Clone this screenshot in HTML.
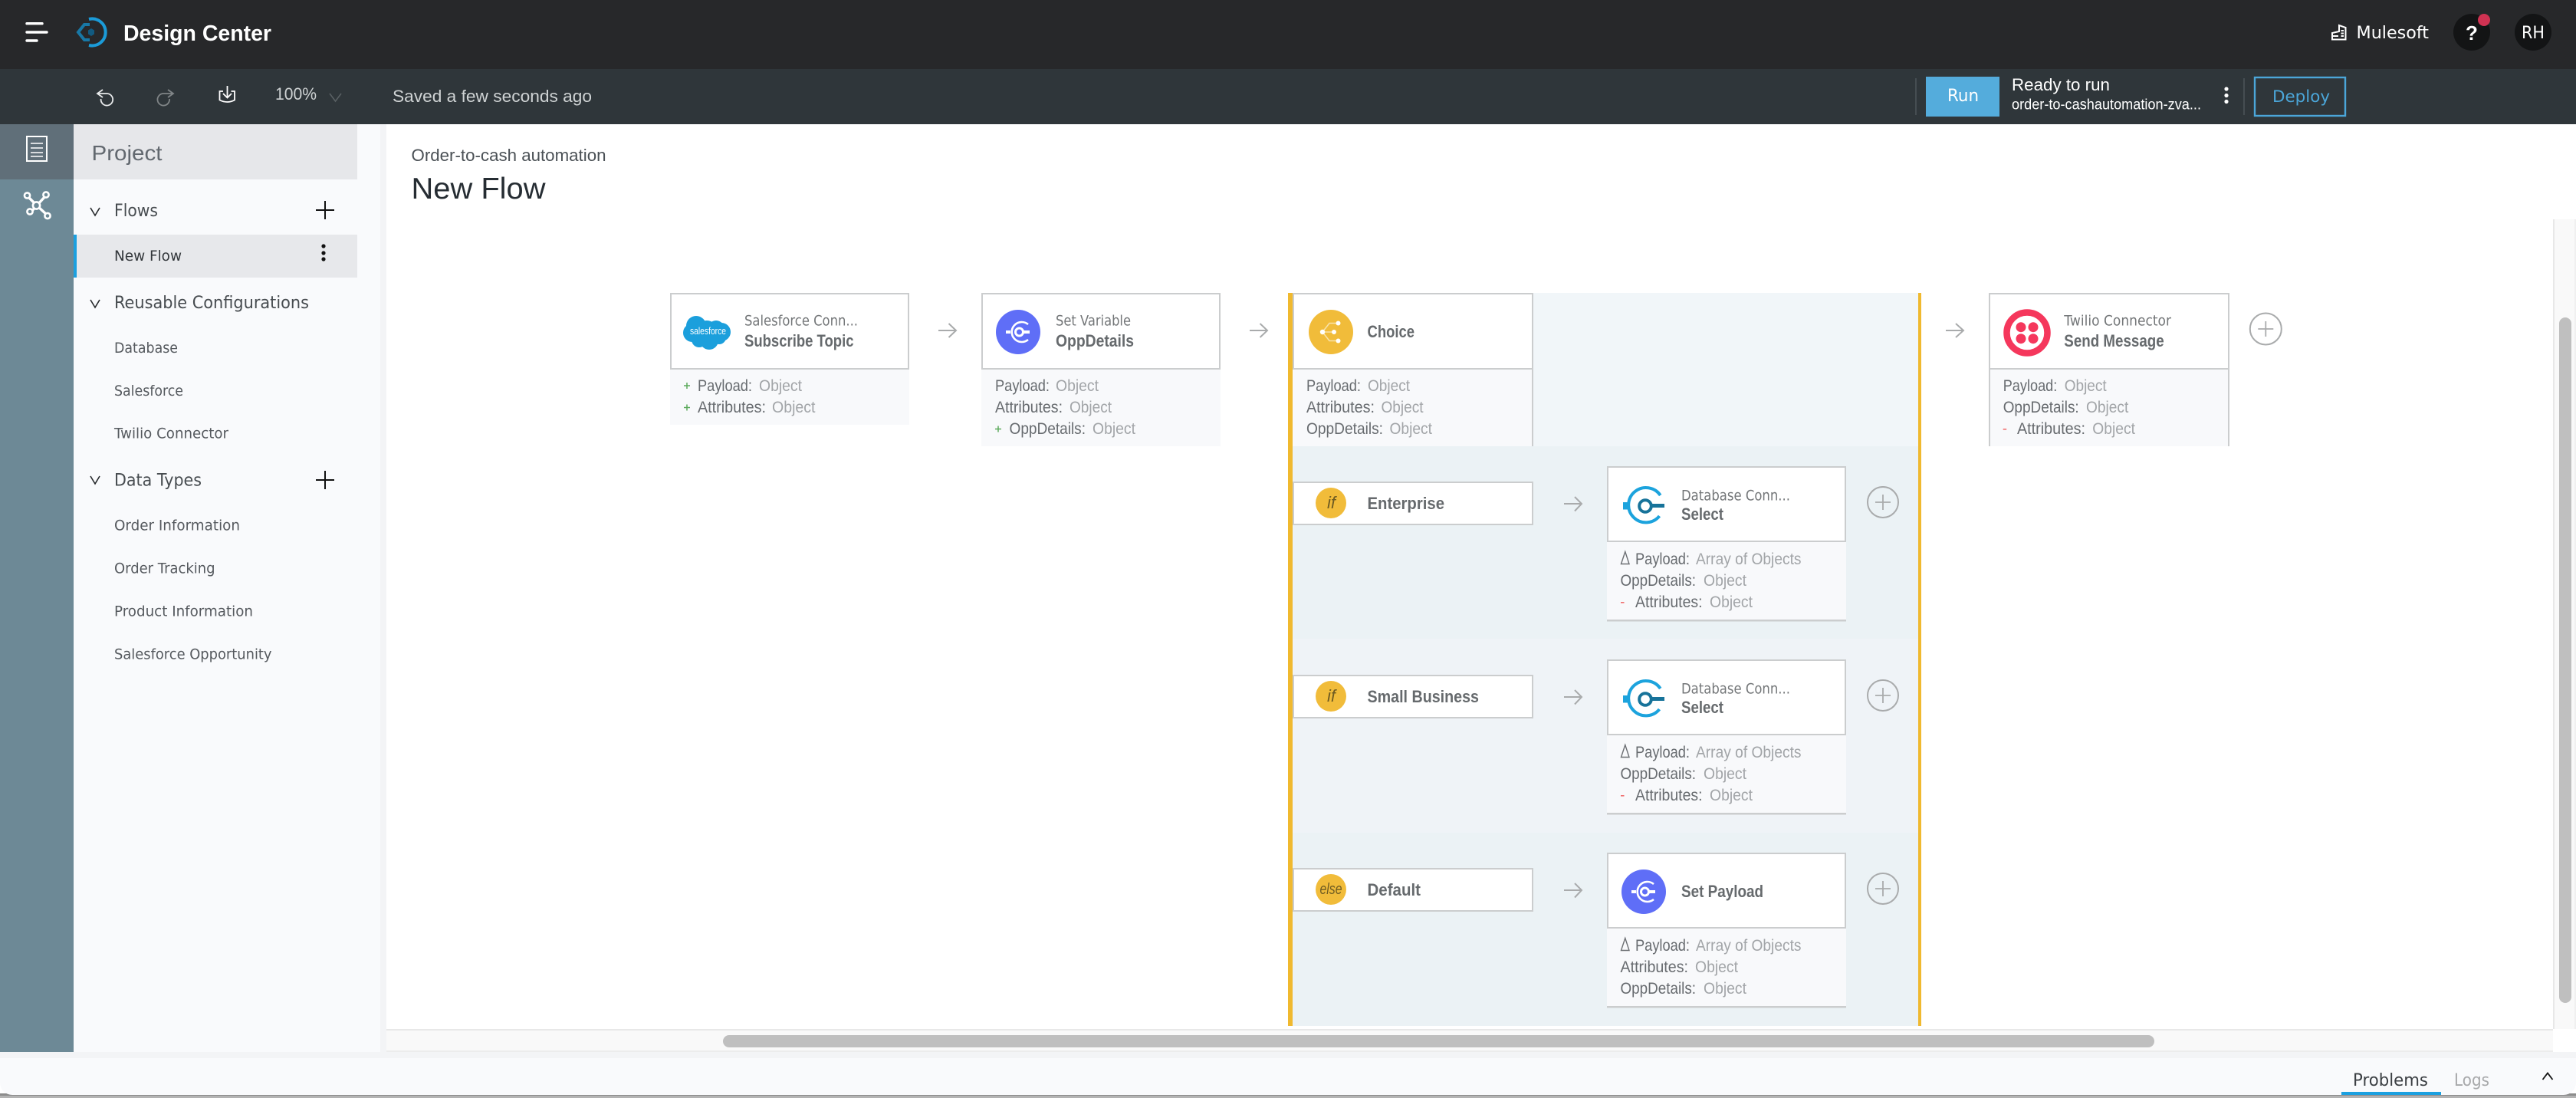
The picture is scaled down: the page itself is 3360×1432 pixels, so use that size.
<!DOCTYPE html>
<html><head><meta charset="utf-8"><title>Design Center</title>
<style>
html,body{margin:0;padding:0;background:#fff;width:3360px;height:1432px;overflow:hidden}
svg{display:block}
text{white-space:pre}
.l{font-family:"Liberation Sans",sans-serif}
.d{font-family:"DejaVu Sans","Liberation Sans",sans-serif}
.side{font-family:"DejaVu Sans","Liberation Sans",sans-serif;font-size:19px;fill:#55595e}
.head{font-family:"DejaVu Sans","Liberation Sans",sans-serif;font-size:22px;fill:#474c50}
.tt{font-family:"DejaVu Sans","Liberation Sans",sans-serif;font-size:19px;fill:#737678}
.tb{font-family:"Liberation Sans",sans-serif;font-size:22px;font-weight:bold;fill:#666a6d}
.k{font-family:"Liberation Sans",sans-serif;font-size:21px;fill:#676b6f}
.v{font-family:"Liberation Sans",sans-serif;font-size:21px;fill:#a2a5a8}
.arw{fill:none;stroke:#a9abac;stroke-width:2}
.bx{fill:#fff;stroke:#cbcdce;stroke-width:2}
</style></head><body>
<svg xmlns="http://www.w3.org/2000/svg" width="3360" height="1432" viewBox="0 0 3360 1432">
<rect width="3360" height="1432" fill="#fff"/>
<!-- top bars -->
<rect width="3360" height="90" fill="#27282a"/>
<rect y="90" width="3360" height="72" fill="#2f363a"/>
<g fill="none" stroke="#fff" stroke-width="3.4" stroke-linecap="round"><path d="M35 30.7H55M35 42H61M35 53H48"/></g>
<path d="M116 25A17.5 17.5 0 1 1 116 59" fill="none" stroke="#1b9bd8" stroke-width="4"/>
<path d="M117 32H110L102 42L110 52H117" fill="none" stroke="#1878a6" stroke-width="4"/>
<path d="M119 37L123 39.5V44.5L119 47L115 44.5V39.5Z" fill="#125a80"/>
<text class="l" x="161" y="53" font-size="29" font-weight="bold" fill="#fff" textLength="193" lengthAdjust="spacingAndGlyphs">Design Center</text>
<!-- toolbar -->
<g fill="none" stroke-width="1.8">
<path d="M134 117L127 122L134 127M127 122H139.5A7.8 7.8 0 1 1 131.6 129" stroke="#e8eaeb"/>
<path d="M219 117L226 122L219 127M226 122H213.5A7.8 7.8 0 1 0 221 129" stroke="#808587"/>
<path d="M291 119H286.5V130.5Q296.5 135.5 306 130.5V119H301.5M296.5 112V127M291 122L296.5 127.5L302 122" stroke="#fff"/>
<path d="M430 122L437.5 132L445 122" stroke="#596063" stroke-width="1.6"/>
</g>
<text class="l" x="359" y="130" font-size="22" fill="#cfd3d4" textLength="54" lengthAdjust="spacingAndGlyphs">100%</text>
<text class="l" x="512" y="133" font-size="22" fill="#cfd3d4" textLength="260" lengthAdjust="spacingAndGlyphs">Saved a few seconds ago</text>
<rect x="2498" y="102" width="2" height="48" fill="#454d52"/>
<rect x="2512" y="100" width="96" height="52" fill="#54acdc"/>
<text class="d" x="2540" y="132" font-size="22" fill="#fff" textLength="41" lengthAdjust="spacingAndGlyphs">Run</text>
<text class="l" x="2624" y="118" font-size="22" fill="#fff" textLength="128" lengthAdjust="spacingAndGlyphs">Ready to run</text>
<text class="l" x="2624" y="142.5" font-size="19" fill="#fff" textLength="247" lengthAdjust="spacingAndGlyphs">order-to-cashautomation-zva...</text>
<g fill="#fff"><circle cx="2904" cy="116" r="2.6"/><circle cx="2904" cy="124.5" r="2.6"/><circle cx="2904" cy="132.5" r="2.6"/></g>
<rect x="2926" y="102" width="2" height="48" fill="#454d52"/>
<rect x="2941" y="101" width="118" height="50" fill="none" stroke="#4ba6d9" stroke-width="2.4"/>
<text class="d" x="2964" y="133" font-size="21" fill="#4ba6d9" textLength="75" lengthAdjust="spacingAndGlyphs">Deploy</text>
<!-- user cluster -->
<path d="M3042 51.5V43L3051 41V33L3059.5 36V51.5ZM3042 47H3050M3053.5 40H3057M3053.5 43.5H3057M3053.5 47H3057" fill="none" stroke="#fff" stroke-width="2"/>
<text class="d" x="3073.5" y="50" font-size="22" fill="#fff" textLength="94.5" lengthAdjust="spacingAndGlyphs">Mulesoft</text>
<circle cx="3224" cy="42" r="24" fill="#131415"/>
<circle cx="3240" cy="26" r="8" fill="#d03252"/>
<text class="l" x="3224" y="52" font-size="26" font-weight="bold" fill="#fff" text-anchor="middle">?</text>
<circle cx="3304" cy="42" r="24" fill="#131415"/>
<text class="d" x="3289" y="50" font-size="22" fill="#fff" textLength="30" lengthAdjust="spacingAndGlyphs">RH</text>
<!-- left rail -->
<rect y="162" width="96" height="1210" fill="#6d8996"/>
<rect y="162" width="96" height="72" fill="#606f79"/>
<rect x="35" y="178" width="26" height="32" fill="none" stroke="#fff" stroke-width="2"/>
<path d="M40 187H56M40 193H56M40 199H56M40 204H56" stroke="#fff" stroke-width="1.6"/>
<g fill="#6d8996" stroke="#fff" stroke-width="2.6">
<path d="M37 257L48 268L59 256M40 277L48 268L61 280" fill="none" stroke-width="3.4"/>
<circle cx="35.5" cy="255" r="3.6"/><circle cx="60" cy="254" r="3.6"/><circle cx="39" cy="276" r="3.6"/><circle cx="62" cy="281.5" r="3.6"/><circle cx="47.5" cy="268" r="4.6"/>
</g>
<!-- sidebar -->
<rect x="96" y="162" width="400" height="1210" fill="#f9fafc"/>
<rect x="496" y="162" width="8" height="1210" fill="#f3f4f6"/>
<rect x="96" y="162" width="370" height="72" fill="#e6e7ea"/>
<text class="l" x="119.5" y="209" font-size="28" fill="#62686f" textLength="92" lengthAdjust="spacingAndGlyphs">Project</text>
<rect x="96" y="306" width="370" height="56" fill="#e7e8eb"/>
<rect x="96" y="306" width="4" height="56" fill="#1ba0e0"/>
<g fill="none" stroke="#26292c" stroke-width="1.6">
<path d="M118 271L124 281L130 271M118 391L124 401L130 391M118 621L124 631L130 621"/>
</g>
<path d="M412 274H436M424 262V286M412 626H436M424 614V638" stroke="#111" stroke-width="2"/>
<g fill="#111"><circle cx="422" cy="321" r="2.6"/><circle cx="422" cy="330" r="2.6"/><circle cx="422" cy="338" r="2.6"/></g>
<text class="head" x="149" y="282" textLength="57" lengthAdjust="spacingAndGlyphs">Flows</text>
<text class="head" x="149" y="402" textLength="254" lengthAdjust="spacingAndGlyphs">Reusable Configurations</text>
<text class="head" x="149" y="633.5" textLength="114" lengthAdjust="spacingAndGlyphs">Data Types</text>
<text class="side" x="149" y="340" style="fill:#33373b" textLength="88" lengthAdjust="spacingAndGlyphs">New Flow</text>
<text class="side" x="149" y="460" textLength="83" lengthAdjust="spacingAndGlyphs">Database</text>
<text class="side" x="149" y="516" textLength="90" lengthAdjust="spacingAndGlyphs">Salesforce</text>
<text class="side" x="149" y="571.5" textLength="149" lengthAdjust="spacingAndGlyphs">Twilio Connector</text>
<text class="side" x="149" y="691.5" textLength="164" lengthAdjust="spacingAndGlyphs">Order Information</text>
<text class="side" x="149" y="747.5" textLength="131.5" lengthAdjust="spacingAndGlyphs">Order Tracking</text>
<text class="side" x="149" y="803.5" textLength="181" lengthAdjust="spacingAndGlyphs">Product Information</text>
<text class="side" x="149" y="859.5" textLength="205.5" lengthAdjust="spacingAndGlyphs">Salesforce Opportunity</text>
<!-- title -->
<text class="l" x="536.5" y="210" font-size="22.5" fill="#4a5055" textLength="254" lengthAdjust="spacingAndGlyphs">Order-to-cash automation</text>
<text class="l" x="536.5" y="259" font-size="39" fill="#262d33" textLength="175" lengthAdjust="spacingAndGlyphs">New Flow</text>
<!-- Node 1: Salesforce -->
<rect x="874" y="482" width="312" height="72" fill="#f8f9fb"/>
<rect x="875" y="383" width="310" height="98" class="bx"/>
<g fill="#1b9fdc"><circle cx="908" cy="425" r="13"/><circle cx="934" cy="429" r="11"/><circle cx="941" cy="433" r="12"/><circle cx="903" cy="434" r="12"/><circle cx="925" cy="444" r="12"/><circle cx="912" cy="443" r="10"/><circle cx="938" cy="440" r="9"/><circle cx="922" cy="432" r="14"/></g>
<text class="l" x="900" y="436" font-size="13" fill="#fff" textLength="47" lengthAdjust="spacingAndGlyphs">salesforce</text>
<text class="tt" x="971" y="424.5" textLength="148" lengthAdjust="spacingAndGlyphs">Salesforce Conn...</text>
<text class="tb" x="971" y="452" textLength="142.5" lengthAdjust="spacingAndGlyphs">Subscribe Topic</text>
<path d="M892 503H900M896 499V507M892 531.5H900M896 527.5V535.5" stroke="#5caa5c" stroke-width="1.5"/>
<text class="k" x="910" y="510" textLength="71" lengthAdjust="spacingAndGlyphs">Payload:</text><text class="v" x="990" y="510" textLength="56" lengthAdjust="spacingAndGlyphs">Object</text>
<text class="k" x="910" y="538" textLength="89" lengthAdjust="spacingAndGlyphs">Attributes:</text><text class="v" x="1007" y="538" textLength="56.5" lengthAdjust="spacingAndGlyphs">Object</text>
<path class="arw" d="M1224 431H1246.5M1237.5 422L1247 431L1237.5 440"/>
<!-- Node 2 -->
<rect x="1280" y="482" width="312" height="100" fill="#f8f9fb"/>
<rect x="1281" y="383" width="310" height="98" class="bx"/>
<circle cx="1328" cy="433" r="29" fill="#5f6ef7"/>
<path d="M1341 423A13 13 0 1 0 1341 443" fill="none" stroke="#fff" stroke-width="2.6"/>
<circle cx="1329.5" cy="433" r="5" fill="none" stroke="#fff" stroke-width="3"/>
<path d="M1334 433H1343" stroke="#fff" stroke-width="4"/><rect x="1312" y="431" width="6" height="4" fill="#fff"/>
<text class="tt" x="1377" y="424.5" textLength="98" lengthAdjust="spacingAndGlyphs">Set Variable</text>
<text class="tb" x="1377" y="452" textLength="102" lengthAdjust="spacingAndGlyphs">OppDetails</text>
<text class="k" x="1298" y="510" textLength="71" lengthAdjust="spacingAndGlyphs">Payload:</text><text class="v" x="1377" y="510" textLength="56" lengthAdjust="spacingAndGlyphs">Object</text>
<text class="k" x="1298" y="538" textLength="88" lengthAdjust="spacingAndGlyphs">Attributes:</text><text class="v" x="1395" y="538" textLength="55" lengthAdjust="spacingAndGlyphs">Object</text>
<path d="M1298 559.5H1306M1302 555.5V563.5" stroke="#5caa5c" stroke-width="1.5"/>
<text class="k" x="1316.5" y="566" textLength="99.5" lengthAdjust="spacingAndGlyphs">OppDetails:</text><text class="v" x="1425" y="566" textLength="56" lengthAdjust="spacingAndGlyphs">Object</text>
<path class="arw" d="M1630 431H1652.5M1643.5 422L1653 431L1643.5 440"/>
<!-- Choice container -->
<rect x="1686" y="382" width="816" height="200" fill="#f1f6f9"/>
<rect x="1686" y="582" width="816" height="251" fill="#ebf2f5"/>
<rect x="1686" y="833" width="816" height="253" fill="#eff3f7"/>
<rect x="1686" y="1086" width="816" height="252" fill="#ebf2f5"/>
<rect x="1680" y="382" width="6" height="956" fill="#f0b92f"/>
<rect x="2502" y="382" width="4" height="956" fill="#f0b92f"/>
<rect x="1686" y="482" width="314" height="100" fill="#f8f9fb"/>
<rect x="1998" y="482" width="2" height="100" fill="#cbcdce"/>
<rect x="1687" y="383" width="312" height="98" class="bx"/>
<circle cx="1736" cy="433" r="29" fill="#f1bc3a"/>
<path d="M1725 433H1740M1725 433L1734 421.5H1745M1725 433L1734 444.5H1745" fill="none" stroke="#f9e2a8" stroke-width="1.6"/>
<g fill="#fff"><circle cx="1725" cy="433" r="3.2"/><circle cx="1740" cy="433" r="3"/><circle cx="1745.5" cy="421.5" r="3"/><circle cx="1745.5" cy="444.5" r="3"/></g>
<text class="tb" x="1783.5" y="440" textLength="61.5" lengthAdjust="spacingAndGlyphs">Choice</text>
<text class="k" x="1704" y="510" textLength="71" lengthAdjust="spacingAndGlyphs">Payload:</text><text class="v" x="1784" y="510" textLength="55" lengthAdjust="spacingAndGlyphs">Object</text>
<text class="k" x="1704" y="538" textLength="89" lengthAdjust="spacingAndGlyphs">Attributes:</text><text class="v" x="1801.5" y="538" textLength="55" lengthAdjust="spacingAndGlyphs">Object</text>
<text class="k" x="1704" y="566" textLength="100" lengthAdjust="spacingAndGlyphs">OppDetails:</text><text class="v" x="1812.5" y="566" textLength="55.5" lengthAdjust="spacingAndGlyphs">Object</text>
<!-- Branch 1 -->
<rect x="1687" y="629" width="312" height="55" class="bx"/>
<circle cx="1736" cy="656" r="20" fill="#f1bc3a"/>
<text class="l" x="1731" y="663" font-size="22" font-style="italic" fill="#6f5c22" textLength="11" lengthAdjust="spacingAndGlyphs">if</text>
<text class="tb" x="1783.5" y="664" textLength="100.5" lengthAdjust="spacingAndGlyphs">Enterprise</text>
<path class="arw" d="M2040 657H2062.5M2054 648L2063 657L2054 666.5"/>
<rect x="2096" y="707" width="312" height="102" fill="#f8f9fb"/>
<rect x="2096" y="808" width="312" height="2.5" fill="#cbcdce"/>
<rect x="2097" y="609" width="310" height="97" class="bx"/>
<path d="M2165.7 646A22.7 22.7 0 1 0 2164.5 673" fill="none" stroke="#1ca3dd" stroke-width="4"/>
<rect x="2117" y="655" width="8" height="9.5" fill="#1ca3dd"/>
<circle cx="2146" cy="660" r="7.8" fill="none" stroke="#17739a" stroke-width="4"/>
<rect x="2154" y="657" width="17" height="5" fill="#17739a"/>
<text class="tt" x="2193" y="652.5" textLength="142" lengthAdjust="spacingAndGlyphs">Database Conn...</text>
<text class="tb" x="2193" y="678" textLength="55" lengthAdjust="spacingAndGlyphs">Select</text>
<circle cx="2456" cy="655" r="20" fill="none" stroke="#a9abac" stroke-width="2"/><path d="M2446 655H2466M2456 645V665" stroke="#a9abac" stroke-width="1.8"/>
<path d="M2114.5 735.5L2119.8 719.5L2125 735.5Z" fill="none" stroke="#6c6f73" stroke-width="1.4"/>
<text class="k" x="2133" y="736" textLength="71" lengthAdjust="spacingAndGlyphs">Payload:</text><text class="v" x="2212" y="736" textLength="137.5" lengthAdjust="spacingAndGlyphs">Array of Objects</text>
<text class="k" x="2113.5" y="764" textLength="98.5" lengthAdjust="spacingAndGlyphs">OppDetails:</text><text class="v" x="2222" y="764" textLength="56" lengthAdjust="spacingAndGlyphs">Object</text>
<rect x="2114" y="785" width="4.5" height="1.6" fill="#f07070"/>
<text class="k" x="2133" y="792" textLength="87.5" lengthAdjust="spacingAndGlyphs">Attributes:</text><text class="v" x="2230" y="792" textLength="56" lengthAdjust="spacingAndGlyphs">Object</text>
<!-- Branch 2 -->
<rect x="1687" y="881" width="312" height="55" class="bx"/>
<circle cx="1736" cy="908" r="20" fill="#f1bc3a"/>
<text class="l" x="1731" y="915" font-size="22" font-style="italic" fill="#6f5c22" textLength="11" lengthAdjust="spacingAndGlyphs">if</text>
<text class="tb" x="1783.5" y="916" textLength="145.5" lengthAdjust="spacingAndGlyphs">Small Business</text>
<path class="arw" d="M2040 909H2062.5M2054 900L2063 909L2054 918.5"/>
<rect x="2096" y="959" width="312" height="102" fill="#f8f9fb"/>
<rect x="2096" y="1060" width="312" height="2.5" fill="#cbcdce"/>
<rect x="2097" y="861" width="310" height="97" class="bx"/>
<path d="M2165.7 898A22.7 22.7 0 1 0 2164.5 925" fill="none" stroke="#1ca3dd" stroke-width="4"/>
<rect x="2117" y="907" width="8" height="9.5" fill="#1ca3dd"/>
<circle cx="2146" cy="912" r="7.8" fill="none" stroke="#17739a" stroke-width="4"/>
<rect x="2154" y="909" width="17" height="5" fill="#17739a"/>
<text class="tt" x="2193" y="904.5" textLength="142" lengthAdjust="spacingAndGlyphs">Database Conn...</text>
<text class="tb" x="2193" y="930" textLength="55" lengthAdjust="spacingAndGlyphs">Select</text>
<circle cx="2456" cy="907" r="20" fill="none" stroke="#a9abac" stroke-width="2"/><path d="M2446 907H2466M2456 897V917" stroke="#a9abac" stroke-width="1.8"/>
<path d="M2114.5 987.5L2119.8 971.5L2125 987.5Z" fill="none" stroke="#6c6f73" stroke-width="1.4"/>
<text class="k" x="2133" y="988" textLength="71" lengthAdjust="spacingAndGlyphs">Payload:</text><text class="v" x="2212" y="988" textLength="137.5" lengthAdjust="spacingAndGlyphs">Array of Objects</text>
<text class="k" x="2113.5" y="1016" textLength="98.5" lengthAdjust="spacingAndGlyphs">OppDetails:</text><text class="v" x="2222" y="1016" textLength="56" lengthAdjust="spacingAndGlyphs">Object</text>
<rect x="2114" y="1037" width="4.5" height="1.6" fill="#f07070"/>
<text class="k" x="2133" y="1044" textLength="87.5" lengthAdjust="spacingAndGlyphs">Attributes:</text><text class="v" x="2230" y="1044" textLength="56" lengthAdjust="spacingAndGlyphs">Object</text>
<!-- Branch 3 -->
<rect x="1687" y="1133" width="312" height="55" class="bx"/>
<circle cx="1736" cy="1160" r="20" fill="#f1bc3a"/>
<text class="l" x="1721.5" y="1166" font-size="20" font-style="italic" fill="#6f5c22" textLength="29" lengthAdjust="spacingAndGlyphs">else</text>
<text class="tb" x="1783.5" y="1168" textLength="69.5" lengthAdjust="spacingAndGlyphs">Default</text>
<path class="arw" d="M2040 1161H2062.5M2054 1152L2063 1161L2054 1170.5"/>
<rect x="2096" y="1211" width="312" height="102" fill="#f8f9fb"/>
<rect x="2096" y="1312" width="312" height="2.5" fill="#cbcdce"/>
<rect x="2097" y="1113" width="310" height="97" class="bx"/>
<circle cx="2144" cy="1163" r="29" fill="#5f6ef7"/>
<path d="M2157 1153A13 13 0 1 0 2157 1173" fill="none" stroke="#fff" stroke-width="2.6"/>
<circle cx="2145.5" cy="1163" r="5" fill="none" stroke="#fff" stroke-width="3"/>
<path d="M2150 1163H2159" stroke="#fff" stroke-width="4"/><rect x="2128" y="1161" width="6" height="4" fill="#fff"/>
<text class="tb" x="2193" y="1170" textLength="107" lengthAdjust="spacingAndGlyphs">Set Payload</text>
<circle cx="2456" cy="1159" r="20" fill="none" stroke="#a9abac" stroke-width="2"/><path d="M2446 1159H2466M2456 1149V1169" stroke="#a9abac" stroke-width="1.8"/>
<path d="M2114.5 1239.5L2119.8 1223.5L2125 1239.5Z" fill="none" stroke="#6c6f73" stroke-width="1.4"/>
<text class="k" x="2133" y="1240" textLength="71" lengthAdjust="spacingAndGlyphs">Payload:</text><text class="v" x="2212" y="1240" textLength="137.5" lengthAdjust="spacingAndGlyphs">Array of Objects</text>
<text class="k" x="2113.5" y="1268" textLength="88.5" lengthAdjust="spacingAndGlyphs">Attributes:</text><text class="v" x="2211" y="1268" textLength="56" lengthAdjust="spacingAndGlyphs">Object</text>
<text class="k" x="2113.5" y="1296" textLength="98.5" lengthAdjust="spacingAndGlyphs">OppDetails:</text><text class="v" x="2222" y="1296" textLength="56" lengthAdjust="spacingAndGlyphs">Object</text>
<!-- Twilio -->
<path class="arw" d="M2538 431H2560.5M2551 422L2561 431L2551 440"/>
<rect x="2594" y="482" width="314" height="100" fill="#f8f9fb"/>
<rect x="2594" y="482" width="2" height="100" fill="#cbcdce"/><rect x="2906" y="482" width="2" height="100" fill="#cbcdce"/>
<rect x="2595" y="383" width="312" height="98" class="bx"/>
<circle cx="2644" cy="434" r="26.5" fill="none" stroke="#f5375c" stroke-width="8.5"/>
<g fill="#f5375c"><circle cx="2636" cy="426.7" r="6.5"/><circle cx="2652" cy="426.7" r="6.5"/><circle cx="2636" cy="441.7" r="6.5"/><circle cx="2652" cy="441.7" r="6.5"/></g>
<text class="tt" x="2692.3" y="424.5" textLength="139.7" lengthAdjust="spacingAndGlyphs">Twilio Connector</text>
<text class="tb" x="2692.3" y="452" textLength="130.4" lengthAdjust="spacingAndGlyphs">Send Message</text>
<circle cx="2955.3" cy="429" r="20.5" fill="none" stroke="#a9abac" stroke-width="2"/><path d="M2945.3 429H2965.3M2955.3 419V439" stroke="#a9abac" stroke-width="1.8"/>
<text class="k" x="2612.7" y="510" textLength="70.6" lengthAdjust="spacingAndGlyphs">Payload:</text><text class="v" x="2692.7" y="510" textLength="55" lengthAdjust="spacingAndGlyphs">Object</text>
<text class="k" x="2612.7" y="538" textLength="99" lengthAdjust="spacingAndGlyphs">OppDetails:</text><text class="v" x="2721" y="538" textLength="55.3" lengthAdjust="spacingAndGlyphs">Object</text>
<rect x="2612.7" y="559" width="4.5" height="1.6" fill="#f07070"/>
<text class="k" x="2631" y="566" textLength="89" lengthAdjust="spacingAndGlyphs">Attributes:</text><text class="v" x="2729.3" y="566" textLength="55.7" lengthAdjust="spacingAndGlyphs">Object</text>
<!-- scrollbars -->
<rect x="3330" y="286" width="28" height="1056" fill="#f9f9f9"/>
<rect x="3330" y="286" width="2" height="1056" fill="#e8e8e8"/>
<rect x="3358" y="286" width="2" height="1056" fill="#f0f0f0"/>
<rect x="3338" y="414" width="16" height="894" rx="8" fill="#bfbfbf"/>
<rect x="504" y="1342" width="2826" height="29" fill="#f9f9f9"/>
<rect x="504" y="1342" width="2826" height="2" fill="#e8e8e8"/>
<rect x="504" y="1370" width="2826" height="2" fill="#ececec"/>
<rect x="943" y="1350" width="1867" height="16" rx="8" fill="#bfbfbf"/>
<!-- bottom panel -->
<rect y="1372" width="3360" height="8" fill="#f3f4f6"/>
<rect y="1426" width="3360" height="6" fill="#b3b3b3"/>
<rect y="1426" width="3360" height="3" fill="#8c8c8c"/>
<path d="M0 1380H3360V1412A16 16 0 0 1 3344 1428H16A16 16 0 0 1 0 1412Z" fill="#f9fafc"/>
<text class="d" x="3069" y="1416" font-size="22" fill="#3b3f43" textLength="98" lengthAdjust="spacingAndGlyphs">Problems</text>
<text class="d" x="3201" y="1416" font-size="22" fill="#a8a9ab" textLength="46" lengthAdjust="spacingAndGlyphs">Logs</text>
<rect x="3054" y="1424" width="130" height="4" fill="#1ba0e0"/>
<path d="M3316.5 1408L3323 1399.5L3329.5 1408" fill="none" stroke="#111" stroke-width="1.8"/>
</svg>
</body></html>
